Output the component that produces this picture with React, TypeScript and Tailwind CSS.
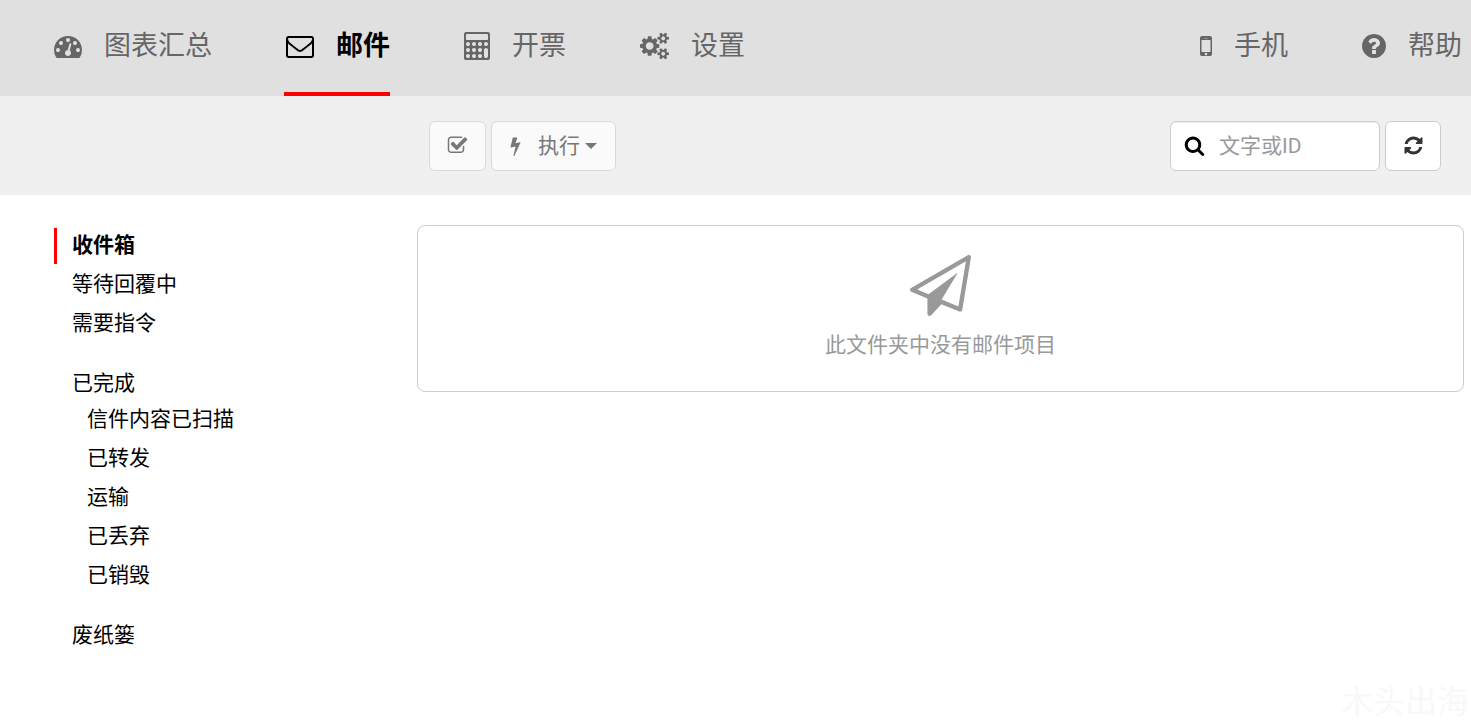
import React from "react";

type IconProps = { className?: string };

function Glyph({ box, d, className = "" }: { box: string; d: string; className?: string }) {
  return (
    <svg viewBox={box} className={`shrink-0 ${className}`} fill="currentColor" aria-hidden="true">
      <path d={d} />
    </svg>
  );
}

const Gauge = ({ className }: IconProps) => (
  <Glyph
    className={className}
    box="0 0 1792 1792"
    d="M384 1152q0-53-37.5-90.5t-90.5-37.5-90.5 37.5-37.5 90.5 37.5 90.5 90.5 37.5 90.5-37.5 37.5-90.5zm192-448q0-53-37.5-90.5t-90.5-37.5-90.5 37.5-37.5 90.5 37.5 90.5 90.5 37.5 90.5-37.5 37.5-90.5zm428 481l101-382q6-26-7.5-48.5t-38.5-29.5-48 6.5-30 39.5l-101 382q-60 5-107 43.5t-63 98.5q-20 77 20 146t117 89 146-20 89-117q16-60-6-117t-72-91zm660-33q0-53-37.5-90.5t-90.5-37.5-90.5 37.5-37.5 90.5 37.5 90.5 90.5 37.5 90.5-37.5 37.5-90.5zm-640-640q0-53-37.5-90.5t-90.5-37.5-90.5 37.5-37.5 90.5 37.5 90.5 90.5 37.5 90.5-37.5 37.5-90.5zm448 192q0-53-37.5-90.5t-90.5-37.5-90.5 37.5-37.5 90.5 37.5 90.5 90.5 37.5 90.5-37.5 37.5-90.5zm320 448q0 261-141 483-19 29-54 29h-1402q-35 0-54-29-141-221-141-483 0-182 71-348t191-286 286-191 348-71 348 71 286 191 191 286 71 348z"
  />
);

const Envelope = ({ className }: IconProps) => (
  <Glyph
    className={className}
    box="0 0 1792 1792"
    d="M1664 1504v-768q-32 36-69 66-268 206-426 338-51 43-83 67t-86.5 48.5-102.5 24.5h-2q-48 0-102.5-24.5t-86.5-48.5-83-67q-158-132-426-338-37-30-69-66v768q0 13 9.5 22.5t22.5 9.5h1472q13 0 22.5-9.5t9.5-22.5zm0-1051v-24.5l-.5-13-3-12.5-5.5-9-9-7.5-14-2.5h-1472q-13 0-22.5 9.5t-9.5 22.5q0 168 147 284 193 152 401 317 6 5 35 29.5t46 37.5 44.5 31.5 50.5 27.5 43 9h2q20 0 43-9t50.5-27.5 44.5-31.5 46-37.5 35-29.5q208-165 401-317 54-43 100.5-115.5t46.5-131.5zm128-37v1088q0 66-47 113t-113 47h-1472q-66 0-113-47t-47-113v-1088q0-66 47-113t113-47h1472q66 0 113 47t47 113z"
  />
);

const calculatorHole = "q0-53-37.5-90.5t-90.5-37.5-90.5 37.5-37.5 90.5 37.5 90.5 90.5 37.5 90.5-37.5 37.5-90.5z";

const Calculator = ({ className }: IconProps) => (
  <Glyph
    className={className}
    box="64 0 1664 1792"
    d={[
      "M448 1536" + calculatorHole,
      "M832 1536" + calculatorHole,
      "M448 1152" + calculatorHole,
      "M1216 1536" + calculatorHole,
      "M832 1152" + calculatorHole,
      "M448 768" + calculatorHole,
      "M1216 1152" + calculatorHole,
      "M832 768" + calculatorHole,
      "M1600 1536v-384q0-52-38-90t-90-38-90 38-38 90v384q0 52 38 90t90 38 90-38 38-90z",
      "M1216 768" + calculatorHole,
      "M1600 448v-256q0-26-19-45t-45-19h-1280q-26 0-45 19t-19 45v256q0 26 19 45t45 19h1280q26 0 45-19t19-45z",
      "M1600 768" + calculatorHole,
      "M1728 128v1536q0 52-38 90t-90 38h-1408q-52 0-90-38t-38-90v-1536q0-52 38-90t90-38h1408q52 0 90 38t38 90z",
    ].join("")}
  />
);

const Cogs = ({ className }: IconProps) => (
  <Glyph
    className={className}
    box="0 0 1920 1792"
    d="M896 896q0-106-75-181t-181-75-181 75-75 181 75 181 181 75 181-75 75-181zm768 512q0-52-38-90t-90-38-90 38-38 90q0 53 37.5 90.5t90.5 37.5 90.5-37.5 37.5-90.5zm0-1024q0-52-38-90t-90-38-90 38-38 90q0 53 37.5 90.5t90.5 37.5 90.5-37.5 37.5-90.5zm-384 421v185q0 10-7 19.5t-16 10.5l-155 24q-11 35-32 76 34 48 90 115 7 11 7 20 0 12-7 19-23 30-82.5 89.5t-78.5 59.5q-11 0-21-7l-115-90q-37 19-77 31-11 108-23 155-7 24-30 24h-186q-11 0-20-7.5t-10-17.5l-23-153q-34-10-75-31l-118 89q-7 7-20 7-11 0-21-8-144-133-144-160 0-9 7-19 10-14 41-53t47-61q-23-44-35-82l-152-24q-10-1-17-9.5t-7-19.5v-185q0-10 7-19.5t16-10.5l155-24q11-35 32-76-34-48-90-115-7-11-7-20 0-12 7-20 22-30 82-89t79-59q11 0 21 7l115 90q34-18 77-32 11-108 23-154 7-24 30-24h186q11 0 20 7.5t10 17.5l23 153q34 10 75 31l118-89q8-7 20-7 11 0 21 8 144 133 144 160 0 8-7 19-12 16-42 54t-45 60q23 48 34 82l152 23q10 2 17 10.5t7 19.5zm640 533v140q0 16-149 31-12 27-30 52 51 113 51 138 0 4-4 7-122 71-124 71-8 0-46-47t-52-68q-20 2-30 2t-30-2q-14 21-52 68t-46 47q-2 0-124-71-4-3-4-7 0-25 51-138-18-25-30-52-149-15-149-31v-140q0-16 149-31 13-29 30-52-51-113-51-138 0-4 4-7 4-2 35-20t59-34 30-16q8 0 46 46.5t52 67.5q20-2 30-2t30 2q51-71 92-112l6-2q4 0 124 70 4 3 4 7 0 25-51 138 17 23 30 52 149 15 149 31zm0-1024v140q0 16-149 31-12 27-30 52 51 113 51 138 0 4-4 7-122 71-124 71-8 0-46-47t-52-68q-20 2-30 2t-30-2q-14 21-52 68t-46 47q-2 0-124-71-4-3-4-7 0-25 51-138-18-25-30-52-149-15-149-31v-140q0-16 149-31 13-29 30-52-51-113-51-138 0-4 4-7 4-2 35-20t59-34 30-16q8 0 46 46.5t52 67.5q20-2 30-2t30 2q51-71 92-112l6-2q4 0 124 70 4 3 4 7 0 25-51 138 17 23 30 52 149 15 149 31z"
  />
);

const Mobile = ({ className }: IconProps) => (
  <Glyph
    className={className}
    box="512 0 768 1792"
    d="M976 1408q0-33-23.5-56.5t-56.5-23.5-56.5 23.5-23.5 56.5 23.5 56.5 56.5 23.5 56.5-23.5 23.5-56.5zm208-160v-704q0-13-9.5-22.5t-22.5-9.5h-512q-13 0-22.5 9.5t-9.5 22.5v704q0 13 9.5 22.5t22.5 9.5h512q13 0 22.5-9.5t9.5-22.5zm-192-848q0-16-16-16h-160q-16 0-16 16t16 16h160q16 0 16-16zm288-16v1024q0 52-38 90t-90 38h-512q-52 0-90-38t-38-90v-1024q0-52 38-90t90-38h512q52 0 90 38t38 90z"
  />
);

const Question = ({ className }: IconProps) => (
  <Glyph
    className={className}
    box="128 0 1536 1792"
    d="M1024 1376v-192q0-14-9-23t-23-9h-192q-14 0-23 9t-9 23v192q0 14 9 23t23 9h192q14 0 23-9t9-23zm256-672q0-88-55.5-163t-138.5-116-170-41q-243 0-371 213-15 24 8 42l132 100q7 6 19 6 16 0 25-12 53-68 86-92 34-24 86-24 48 0 85.5 26t37.5 59q0 38-20 61t-68 45q-63 28-115.5 86.5t-52.5 125.5v36q0 14 9 23t23 9h192q14 0 23-9t9-23q0-19 21.5-49.5t54.5-49.5q32-18 49-28.5t46-35 44.5-48 28-60.5 12.5-81zm384 192q0 209-103 385.5t-279.5 279.5-385.5 103-385.5-103-279.5-279.5-103-385.5 103-385.5 279.5-279.5 385.5-103 385.5 103 279.5 279.5 103 385.5z"
  />
);

const CheckSquare = ({ className }: IconProps) => (
  <Glyph
    className={className}
    box="0 0 1792 1792"
    d="M1472 930v318q0 119-84.5 203.5t-203.5 84.5h-832q-119 0-203.5-84.5t-84.5-203.5v-832q0-119 84.5-203.5t203.5-84.5h832q63 0 117 25 15 7 18 23 3 17-9 29l-49 49q-10 10-23 10-3 0-9-2-23-6-45-6h-832q-66 0-113 47t-47 113v832q0 66 47 113t113 47h832q66 0 113-47t47-113v-254q0-13 9-22l64-64q10-10 23-10 6 0 12 3 20 8 20 29zm231-489l-814 814q-24 24-57 24t-57-24l-430-430q-24-24-24-57t24-57l110-110q24-24 57-24t57 24l263 263 647-647q24-24 57-24t57 24l110 110q24 24 24 57t-24 57z"
  />
);

const Bolt = ({ className }: IconProps) => (
  <Glyph
    className={className}
    box="448 0 896 1792"
    d="M1333 566q18 20 7 44l-540 1157q-13 25-42 25-4 0-14-2-17-5-25.5-19t-4.5-30l197-808-406 101q-4 1-12 1-18 0-31-11-18-15-13-39l201-825q4-14 16-23t28-9h328q19 0 32 12.5t13 29.5q0 8-5 18l-171 463 396-98q8-2 12-2 19 0 34 15z"
  />
);

const Search = ({ className }: IconProps) => (
  <Glyph
    className={className}
    box="0 0 1792 1792"
    d="M1216 832q0-185-131.5-316.5t-316.5-131.5-316.5 131.5-131.5 316.5 131.5 316.5 316.5 131.5 316.5-131.5 131.5-316.5zm512 832q0 52-38 90t-90 38q-54 0-90-38l-343-342q-179 124-399 124-143 0-273.5-55.5t-225-150-150-225-55.5-273.5 55.5-273.5 150-225 225-150 273.5-55.5 273.5 55.5 225 150 150 225 55.5 273.5q0 220-124 399l343 343q37 37 37 90z"
  />
);

const Refresh = ({ className }: IconProps) => (
  <Glyph
    className={className}
    box="0 0 1792 1792"
    d="M1639 1056q0 5-1 7-64 268-268 434.5t-478 166.5q-146 0-282.5-55t-243.5-157l-129 129q-19 19-45 19t-45-19-19-45v-448q0-26 19-45t45-19h448q26 0 45 19t19 45-19 45l-137 137q71 66 161 102t187 36q134 0 250-65t186-179q11-17 53-117 8-23 30-23h192q13 0 22.5 9.5t9.5 22.5zm25-800v448q0 26-19 45t-45 19h-448q-26 0-45-19t-19-45 19-45l138-138q-148-137-349-137-134 0-250 65t-186 179q-11 17-53 117-8 23-30 23h-199q-13 0-22.5-9.5t-9.5-22.5v-7q65-268 270-434.5t480-166.5q146 0 284 55.5t245 156.5l130-129q19-19 45-19t45 19 19 45z"
  />
);

const PaperPlane = ({ className }: IconProps) => (
  <Glyph
    className={className}
    box="0 0 1792 1792"
    d="M1764 11q33 24 27 64l-256 1536q-5 29-32 45-14 8-31 8-11 0-24-5l-527-215-298 327q-18 21-47 21-14 0-23-4-19-7-30-23.5t-11-36.5v-452l-472-193q-37-14-40-55-3-39 32-59l1664-960q35-21 68 2zm-342 1499l221-1323-1434 827 336 137 863-639-478 797z"
  />
);

const Caret = ({ className }: IconProps) => <Glyph className={className} box="0 0 12 6" d="M0 0h12l-6 6z" />;

type NavItem = { label: string; icon: React.ReactNode; active?: boolean };

const primaryNav: NavItem[] = [
  { label: "图表汇总", icon: <Gauge className="size-7" /> },
  { label: "邮件", icon: <Envelope className="size-7" />, active: true },
  { label: "开票", icon: <Calculator className="h-7 w-[26px]" /> },
  { label: "设置", icon: <Cogs className="h-7 w-[29px]" /> },
];

const secondaryNav: NavItem[] = [
  { label: "手机", icon: <Mobile className="h-7 w-3" /> },
  { label: "帮助", icon: <Question className="h-7 w-6" /> },
];

function NavLink({ label, icon, active }: NavItem) {
  return (
    <a
      href="#"
      aria-current={active ? "page" : undefined}
      className={`flex h-24 items-center gap-5 border-b-4 text-[27px] leading-10 whitespace-nowrap ${
        active ? "border-[#ff0000] font-bold text-black" : "border-transparent text-[#666666]"
      }`}
    >
      <span className="mx-0.5">{icon}</span>
      <span>{label}</span>
    </a>
  );
}

type Folder = { label: string; active?: boolean };

const folderGroups: { folders: Folder[]; children?: Folder[] }[] = [
  { folders: [{ label: "收件箱", active: true }, { label: "等待回覆中" }, { label: "需要指令" }] },
  {
    folders: [{ label: "已完成" }],
    children: [
      { label: "信件内容已扫描" },
      { label: "已转发" },
      { label: "运输" },
      { label: "已丢弃" },
      { label: "已销毁" },
    ],
  },
  { folders: [{ label: "废纸篓" }] },
];

function FolderList({ folders, nested }: { folders: Folder[]; nested?: boolean }) {
  return (
    <ul className={`flex flex-col gap-[3px] ${nested ? "pl-[15px]" : ""}`}>
      {folders.map((folder) => (
        <li key={folder.label}>
          <a
            href="#"
            className={`block h-9 border-l-[3px] pl-[15px] text-[21px] leading-[34px] text-black ${
              folder.active ? "border-[#ff0000] font-bold" : "border-transparent"
            }`}
          >
            {folder.label}
          </a>
        </li>
      ))}
    </ul>
  );
}

export default function App() {
  return (
    <div
      lang="zh-CN"
      className="flex min-h-screen flex-col bg-white font-[Roboto,'Noto_Sans_CJK_SC',sans-serif]"
    >
      <header className="flex justify-between bg-[#e0e0e0] pr-[9px] pl-[52px]">
        <nav className="flex gap-[72px]">
          {primaryNav.map((item) => (
            <NavLink key={item.label} {...item} />
          ))}
        </nav>
        <nav className="flex gap-[72px]">
          {secondaryNav.map((item) => (
            <NavLink key={item.label} {...item} />
          ))}
        </nav>
      </header>

      <div className="flex h-[99px] items-center justify-between bg-[#f0f0f0] pr-[30px] pl-[429px]">
        <div className="flex gap-[5px]">
          <button
            type="button"
            aria-label="全选"
            className="flex h-[50px] w-[57px] items-center justify-center rounded-md border border-[#d9d9d9] bg-[#fafafa] text-[#777777]"
          >
            <CheckSquare className="size-[21px]" />
          </button>
          <button
            type="button"
            className="flex h-[50px] w-[125px] items-center rounded-md border border-[#d9d9d9] bg-[#fafafa] pl-[18px] text-[21px] text-[#777777]"
          >
            <Bolt className="h-5 w-[11px]" />
            <span className="ml-[17px] pt-0.5">执行</span>
            <Caret className="ml-[5px] h-1.5 w-3" />
          </button>
        </div>
        <div className="flex gap-[5px]">
          <label className="flex h-[50px] w-[210px] items-center gap-3.5 rounded-md border border-[#cccccc] bg-white pl-[13px] shadow-[inset_0_1px_1px_rgba(0,0,0,0.075)]">
            <Search className="size-[21px] text-black" />
            <input
              type="text"
              aria-label="搜索"
              placeholder="文字或ID"
              className="w-full min-w-0 bg-transparent pt-0.5 text-[21px] text-[#555555] outline-none placeholder:text-[#999999]"
            />
          </label>
          <button
            type="button"
            aria-label="刷新"
            className="flex h-[50px] w-14 items-center justify-center rounded-md border border-[#cccccc] bg-white text-[#333333]"
          >
            <Refresh className="size-[21px]" />
          </button>
        </div>
      </div>

      <div className="flex grow items-start pr-[7px]">
        <aside className="flex w-[417px] shrink-0 flex-col gap-6 pt-[33px] pl-[54px]">
          {folderGroups.map((group) => (
            <div key={group.folders[0].label}>
              <FolderList folders={group.folders} />
              {group.children && <FolderList folders={group.children} nested />}
            </div>
          ))}
        </aside>
        <main className="mt-[30px] flex h-[167px] grow flex-col items-center rounded-lg border border-[#cccccc] pt-[29px] text-[#999999]">
          <PaperPlane className="size-[61px]" />
          <p className="mt-3 text-[21px] leading-[34px]">此文件夹中没有邮件项目</p>
        </main>
      </div>

      <footer className="flex justify-end pr-0.5 text-[32px] leading-9 text-[#f7f9f9]">木头出海</footer>
    </div>
  );
}
